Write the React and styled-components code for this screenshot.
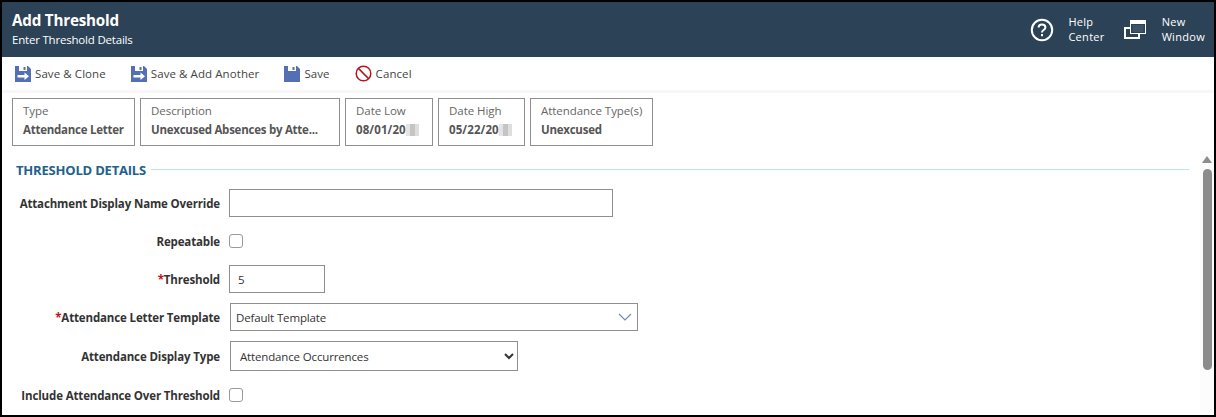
import styled, { createGlobalStyle } from 'styled-components';

const GlobalStyle = createGlobalStyle`
  html, body {
    margin: 0;
    padding: 0;
    background: #fff;
  }
  body {
    font-family: 'Open Sans', 'Noto Sans', sans-serif;
    font-size: 12px;
    color: #333;
  }
`;

function SaveIcon({ arrow }) {
  return (
    <svg width="16" height="16" viewBox="0 0 16 16">
      <path d="M0 0h13l3 3v13H0z" fill="#5470b4" />
      <rect x="4" y="0" width="8" height="5" fill="#fff" />
      <rect x="8.5" y="1" width="2" height="3" fill="#5470b4" />
      {arrow && <path d="M2.5 9h7V6.5l4.5 3.75L9.5 14v-2.5h-7z" fill="#fff" />}
    </svg>
  );
}

function CancelIcon() {
  return (
    <svg width="17" height="17" viewBox="0 0 17 17">
      <circle cx="8.5" cy="8.5" r="7.3" fill="none" stroke="#c1121c" strokeWidth="1.5" />
      <path d="M3.4 3.4l10.2 10.2" stroke="#c1121c" strokeWidth="1.5" />
    </svg>
  );
}

function HelpIcon() {
  return (
    <svg width="24" height="24" viewBox="0 0 24 24">
      <circle cx="12" cy="12" r="10.2" fill="none" stroke="#fff" strokeWidth="2" />
      <path d="M8.6 9.6c0-2 1.5-3.1 3.4-3.1s3.4 1.1 3.4 2.9c0 2.6-3.4 2.6-3.4 5" fill="none" stroke="#fff" strokeWidth="2" />
      <rect x="11" y="16" width="2" height="2.2" fill="#fff" />
    </svg>
  );
}

function WindowIcon() {
  return (
    <svg width="22" height="19" viewBox="0 0 22 19">
      <path d="M1 8h14v10H1z" fill="none" stroke="#fff" strokeWidth="2" />
      <rect x="6" y="0" width="16" height="14" fill="#fff" />
      <rect x="7" y="4" width="14" height="9" fill="#2c4257" />
      <rect x="8.5" y="5" width="11" height="7" fill="#3e5368" />
    </svg>
  );
}

export default function App() {
  return (
    <Frame>
      <GlobalStyle />
      <Header>
        <HeaderTitles>
          <Title>Add Threshold</Title>
          <Subtitle>Enter Threshold Details</Subtitle>
        </HeaderTitles>
        <HeaderActions>
          <HeaderAction $gap={14}>
            <HelpIcon />
            <HeaderLabel>Help<br />Center</HeaderLabel>
          </HeaderAction>
          <HeaderAction $gap={16}>
            <WindowIcon />
            <HeaderLabel>New<br />Window</HeaderLabel>
          </HeaderAction>
        </HeaderActions>
      </Header>

      <Toolbar>
        <ToolButton><SaveIcon arrow />Save &amp; Clone</ToolButton>
        <ToolButton><SaveIcon arrow />Save &amp; Add Another</ToolButton>
        <ToolButton><SaveIcon />Save</ToolButton>
        <ToolButton><CancelIcon />Cancel</ToolButton>
      </Toolbar>

      <Chips>
        <Chip $width={123}>
          <ChipLabel>Type</ChipLabel>
          <ChipValue>Attendance Letter</ChipValue>
        </Chip>
        <Chip $width={200}>
          <ChipLabel>Description</ChipLabel>
          <ChipValue>Unexcused Absences by Atte...</ChipValue>
        </Chip>
        <Chip $width={88}>
          <ChipLabel>Date Low</ChipLabel>
          <ChipValue $date>08/01/20<Redacted /></ChipValue>
        </Chip>
        <Chip $width={87}>
          <ChipLabel>Date High</ChipLabel>
          <ChipValue $date>05/22/20<Redacted /></ChipValue>
        </Chip>
        <Chip $width={123}>
          <ChipLabel>Attendance Type(s)</ChipLabel>
          <ChipValue>Unexcused</ChipValue>
        </Chip>
      </Chips>

      <Body>
        <Content>
          <SectionHeading>
            <SectionTitle>THRESHOLD DETAILS</SectionTitle>
            <SectionRule />
          </SectionHeading>
          <Form>
            <Row>
              <Label>Attachment Display Name Override</Label>
              <TextInput $width={384} />
            </Row>
            <Row>
              <Label>Repeatable</Label>
              <Check type="checkbox" />
            </Row>
            <Row>
              <Label><Required>*</Required>Threshold</Label>
              <TextInput $width={96} defaultValue="5" />
            </Row>
            <Row>
              <Label><Required>*</Required>Attendance Letter Template</Label>
              <Combo>
                Default Template
                <svg width="14" height="8" viewBox="0 0 14 8">
                  <path d="M1 1l6 6 6-6" fill="none" stroke="#6f8cc4" strokeWidth="1.2" />
                </svg>
              </Combo>
            </Row>
            <Row $tall>
              <Label>Attendance Display Type</Label>
              <Select defaultValue="occ">
                <option value="occ">Attendance Occurrences</option>
              </Select>
            </Row>
            <Row>
              <Label>Include Attendance Over Threshold</Label>
              <Check type="checkbox" />
            </Row>
          </Form>
        </Content>
        <Scrollbar>
          <ScrollArrow />
          <ScrollThumb />
        </Scrollbar>
      </Body>
    </Frame>
  );
}

const Frame = styled.div`
  box-sizing: border-box;
  width: 1216px;
  height: 417px;
  border: 2px solid #000;
  display: flex;
  flex-direction: column;
  overflow: hidden;
  background: #fff;
`;

const Header = styled.header`
  height: 55px;
  flex: none;
  background: #2c4257;
  color: #fff;
  display: flex;
  justify-content: space-between;
  align-items: center;
  padding: 0 9px 0 10px;
`;

const HeaderTitles = styled.div`
  display: flex;
  flex-direction: column;
`;

const Title = styled.div`
  font-size: 15.2px;
  font-weight: 700;
  line-height: 20px;
  letter-spacing: -0.2px;
`;

const Subtitle = styled.div`
  font-size: 11.5px;
  line-height: 20px;
  letter-spacing: -0.2px;
`;

const HeaderActions = styled.div`
  display: flex;
  align-items: center;
`;

const HeaderAction = styled.div`
  display: flex;
  align-items: center;
  gap: ${p => p.$gap}px;

  & + & {
    margin-left: 19px;
  }
`;

const HeaderLabel = styled.div`
  font-size: 11px;
  line-height: 15px;
  letter-spacing: 0.3px;
  margin-top: -2px;
`;

const Toolbar = styled.div`
  height: 33px;
  flex: none;
  display: flex;
  align-items: center;
  gap: 25px;
  padding: 0 13px;
  border-bottom: 3px solid #f7f7f7;
`;

const ToolButton = styled.div`
  display: flex;
  align-items: center;
  gap: 4px;
  font-size: 11.5px;
  color: #444;
  letter-spacing: 0.08px;
`;

const Chips = styled.div`
  flex: none;
  display: flex;
  gap: 5px;
  padding: 5px 10px 0;
`;

const Chip = styled.div`
  box-sizing: border-box;
  width: ${p => p.$width}px;
  height: 48px;
  border: 1px solid #8f8f8f;
  padding: 3px 10px;
  white-space: nowrap;
  overflow: hidden;
`;

const ChipLabel = styled.div`
  font-size: 11.5px;
  line-height: 18px;
  color: #666;
  letter-spacing: -0.05px;
`;

const ChipValue = styled.div`
  font-size: 11.5px;
  font-weight: 700;
  line-height: 20px;
  color: #555;
  letter-spacing: ${p => (p.$date ? '0.1px' : '-0.25px')};
  display: flex;
  align-items: center;
`;

const Redacted = styled.span`
  display: inline-block;
  width: 13px;
  height: 12px;
  background: linear-gradient(90deg, #e4e4e4 0 33%, #c4c4c4 33% 66%, #dedede 66%);
`;

const Body = styled.div`
  flex: 1;
  min-height: 0;
  display: flex;
`;

const Content = styled.div`
  flex: 1;
  min-width: 0;
  padding: 16px 11px 0 14px;
`;

const SectionHeading = styled.div`
  display: flex;
  align-items: center;
  gap: 5px;
  height: 16px;
`;

const SectionTitle = styled.div`
  font-size: 13px;
  font-weight: 700;
  color: #21618c;
  letter-spacing: -0.2px;
  white-space: nowrap;
`;

const SectionRule = styled.div`
  flex: 1;
  height: 1px;
  background: #bfe0f2;
  position: relative;
  top: -1px;
`;

const Form = styled.div`
  display: flex;
  flex-direction: column;
  padding-top: 6px;
  margin-left: -1px;
`;

const Row = styled.div`
  height: ${p => (p.$tall ? 40 : 38)}px;
  display: flex;
  align-items: center;
  gap: 9px;
`;

const Label = styled.label`
  box-sizing: border-box;
  width: 205px;
  flex: none;
  text-align: right;
  font-size: 11.5px;
  font-weight: 700;
  color: #333;
  letter-spacing: -0.14px;
  white-space: nowrap;
`;

const Required = styled.span`
  color: #c1121c;
`;

const TextInput = styled.input`
  box-sizing: border-box;
  width: ${p => p.$width}px;
  height: 28px;
  border: 1px solid #8f8f8f;
  padding: 0 8px;
  font: 11.5px 'Open Sans', sans-serif;
  color: #333;
  outline: none;
`;

const Check = styled.input`
  appearance: none;
  box-sizing: border-box;
  width: 14px;
  height: 14px;
  margin: 0;
  border: 1px solid #999;
  border-radius: 3px;
  background: #fff;
`;

const Combo = styled.div`
  box-sizing: border-box;
  width: 408px;
  height: 28px;
  margin-left: 1px;
  border: 1px solid #8f8f8f;
  padding: 0 5px;
  display: flex;
  align-items: center;
  justify-content: space-between;
  font-size: 11.5px;
  color: #333;
  letter-spacing: -0.15px;
`;

const Select = styled.select`
  box-sizing: border-box;
  width: 288px;
  height: 30px;
  margin-left: 1px;
  border: 1px solid #8f8f8f;
  border-radius: 0;
  padding: 0 5px;
  background: #fff;
  font: 11.5px 'Open Sans', sans-serif;
  color: #333;
  letter-spacing: -0.15px;
`;

const Scrollbar = styled.div`
  flex: none;
  width: 14px;
  margin-top: 5px;
  padding-top: 5px;
  background: #fcfcfc;
  display: flex;
  flex-direction: column;
  align-items: center;
`;

const ScrollArrow = styled.div`
  flex: none;
  width: 0;
  height: 0;
  border-left: 5px solid transparent;
  border-right: 5px solid transparent;
  border-bottom: 7px solid #8c8c8c;
`;

const ScrollThumb = styled.div`
  flex: none;
  width: 9px;
  height: 201px;
  margin-top: 6px;
  border-radius: 5px;
  background: #8c8c8c;
`;
